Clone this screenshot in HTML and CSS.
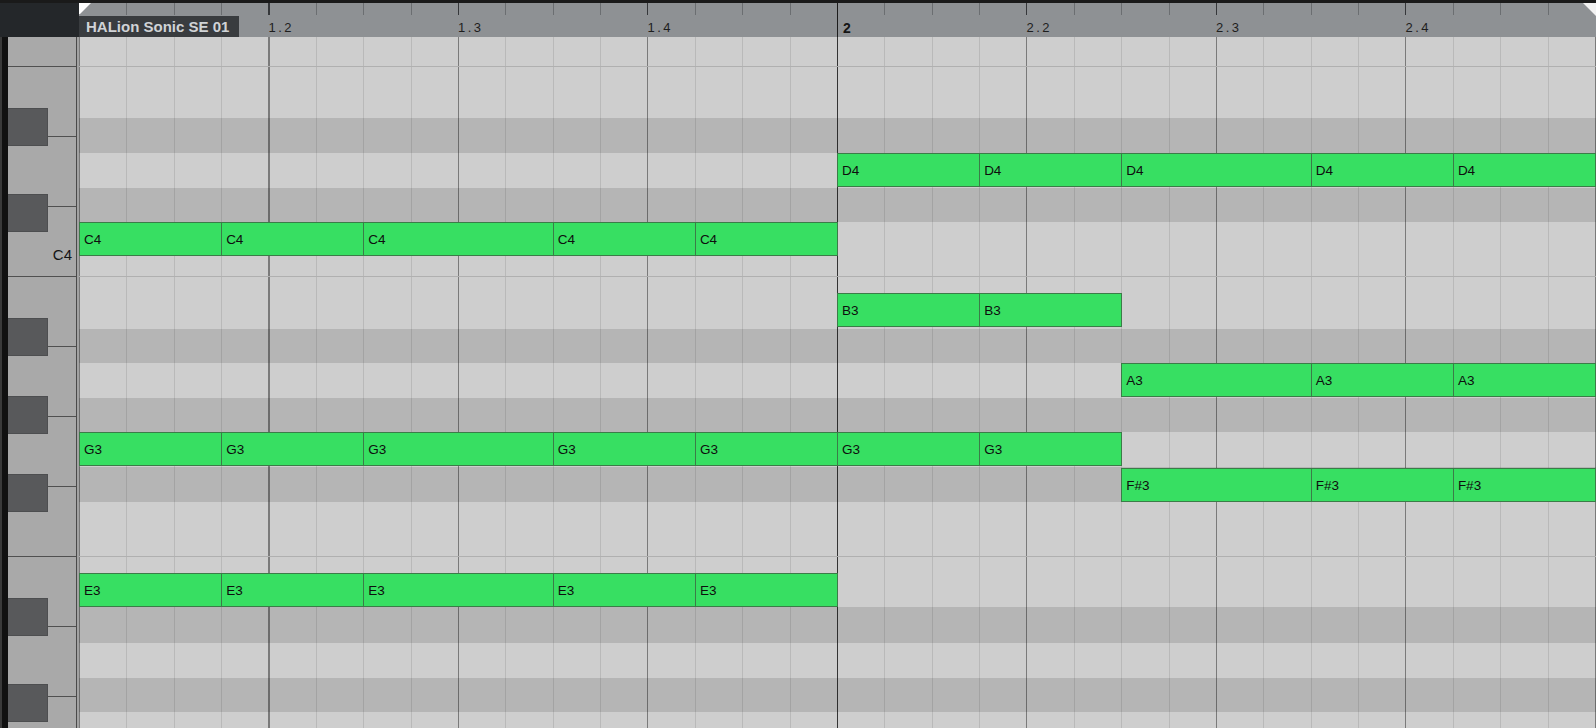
FILE: index.html
```html
<!DOCTYPE html>
<html lang="en">
<head>
  <meta charset="UTF-8">
  <meta name="viewport" content="width=device-width, initial-scale=1.0">
  <title>Key Editor</title>
  <link rel="stylesheet" href="styles.css">
</head>
<body>
  <div class="editor">
    <div class="topbar"></div>
    <header class="header">
      <div class="corner"></div>
      <div class="ruler">
        <div class="beat first"><span class="part-name">HALion Sonic SE 01</span></div>
        <div class="beat"><span>1.2</span></div>
        <div class="beat"><span>1.3</span></div>
        <div class="beat"><span>1.4</span></div>
        <div class="beat bar"><span class="bar-num">2</span></div>
        <div class="beat"><span>2.2</span></div>
        <div class="beat"><span>2.3</span></div>
        <div class="beat"><span>2.4</span></div>
      </div>
    </header>
    <main class="main">
      <div class="gutter"></div>
      <div class="piano">
        <div class="keys">
          <div class="wkey partial"></div>
          <div class="wkey"></div>
          <div class="wkey"></div>
          <div class="wkey"><span class="key-name">C4</span></div>
          <div class="wkey"></div>
          <div class="wkey"></div>
          <div class="wkey"></div>
          <div class="wkey"></div>
          <div class="wkey"></div>
          <div class="wkey"></div>
          <div class="wkey"></div>
        </div>
        <div class="bkey k1"></div>
        <div class="bkey k2"></div>
        <div class="bkey k3"></div>
        <div class="bkey k4"></div>
        <div class="bkey k5"></div>
        <div class="bkey k6"></div>
        <div class="bkey k7"></div>
      </div>
      <div class="roll">
        <!-- F4 -->
        <div class="row h29"></div>
        <!-- E4 -->
        <div class="row oct h52"></div>
        <!-- D#4 -->
        <div class="row dark"></div>
        <!-- D4 -->
        <div class="row">
          <div class="note at-17 n3">D4</div>
          <div class="note n3">D4</div>
          <div class="note n4">D4</div>
          <div class="note n3">D4</div>
          <div class="note n3">D4</div>
        </div>
        <!-- C#4 -->
        <div class="row dark h34"></div>
        <!-- C4 -->
        <div class="row h54">
          <div class="note n3">C4</div>
          <div class="note n3">C4</div>
          <div class="note n4">C4</div>
          <div class="note n3">C4</div>
          <div class="note n3">C4</div>
        </div>
        <!-- B3 -->
        <div class="row oct low h53">
          <div class="note at-17 n3">B3</div>
          <div class="note n3">B3</div>
        </div>
        <!-- A#3 -->
        <div class="row dark h34"></div>
        <!-- A3 -->
        <div class="row">
          <div class="note at-23 n4">A3</div>
          <div class="note n3">A3</div>
          <div class="note n3">A3</div>
        </div>
        <!-- G#3 -->
        <div class="row dark h34"></div>
        <!-- G3 -->
        <div class="row">
          <div class="note n3">G3</div>
          <div class="note n3">G3</div>
          <div class="note n4">G3</div>
          <div class="note n3">G3</div>
          <div class="note n3">G3</div>
          <div class="note n3">G3</div>
          <div class="note n3">G3</div>
        </div>
        <!-- F#3 -->
        <div class="row dark nudge">
          <div class="note at-23 n4">F#3</div>
          <div class="note n3">F#3</div>
          <div class="note n3">F#3</div>
        </div>
        <!-- F3 -->
        <div class="row h54"></div>
        <!-- E3 -->
        <div class="row oct low h51">
          <div class="note n3">E3</div>
          <div class="note n3">E3</div>
          <div class="note n4">E3</div>
          <div class="note n3">E3</div>
          <div class="note n3">E3</div>
        </div>
        <!-- D#3 -->
        <div class="row dark h36"></div>
        <!-- D3 -->
        <div class="row"></div>
        <!-- C#3 -->
        <div class="row dark h34"></div>
        <!-- C3 -->
        <div class="row h54"></div>
      </div>
    </main>
  </div>
</body>
</html>
```

FILE: styles.css
```css
* {
  box-sizing: border-box;
}
body {
  margin: 0;
  background: #121212;
  font-family: "Liberation Sans", Arial, sans-serif;
  overflow: hidden;
}
.editor {
  width: 1596px;
  height: 728px;
  overflow: hidden;
  display: flex;
  flex-direction: column;
}
.topbar {
  flex: none;
  height: 3px;
  background: #1a1a1a;
}

/* ruler */
.header {
  flex: none;
  display: flex;
  height: 34px;
}
.corner {
  width: 79px;
  background: #24272a;
}
.ruler {
  flex: 1;
  position: relative;
  display: grid;
  grid-template-columns: repeat(8, 189.5px);
  background:
    repeating-linear-gradient(to right, #35373a 0 1px, transparent 1px 189.5px) 0 0 / 100% 12px no-repeat,
    repeating-linear-gradient(to right, #6b6e71 0 1px, transparent 1px 47.375px) 0 0 / 100% 12px no-repeat,
    #8e9194;
}
.ruler::before {
  content: "";
  position: absolute;
  left: 0;
  top: 0;
  border-top: 12px solid #fff;
  border-right: 12px solid transparent;
}
.ruler::after {
  content: "";
  position: absolute;
  right: 0;
  top: 0;
  border-top: 13px solid #f2f2f2;
  border-left: 13px solid transparent;
}
.beat {
  display: flex;
  align-items: flex-end;
  padding-bottom: 2px;
}
.beat span {
  font-size: 13px;
  line-height: 14px;
  letter-spacing: 2.5px;
  color: #1e1e1e;
}
.beat.first {
  padding-bottom: 0;
}
.beat .part-name {
  width: 160px;
  height: 21px;
  line-height: 21px;
  padding-left: 7px;
  font-size: 15px;
  font-weight: bold;
  letter-spacing: 0;
  color: #d0d3d6;
  background: #393c3f;
  white-space: nowrap;
}
.beat.bar {
  border-left: 1px solid #1c1c1c;
  padding-left: 5px;
}
.beat .bar-num {
  font-size: 14px;
  font-weight: bold;
  letter-spacing: 0;
  color: #151515;
}

/* keyboard */
.main {
  flex: 1;
  display: flex;
  min-height: 0;
}
.gutter {
  flex: none;
  width: 8px;
  background: #111;
  border-left: 2px solid #3a3a3a;
}
.piano {
  flex: none;
  position: relative;
  width: 71px;
  background: #a2a2a2;
  overflow: hidden;
}
.keys {
  width: 69px;
  height: 100%;
  border-right: 1px solid #4a4a4a;
  background: #a9a9a9;
}
.wkey {
  height: 70px;
  display: flex;
  justify-content: flex-end;
  align-items: flex-end;
  padding: 0 4px 14px 0;
}
.wkey + .wkey {
  border-top: 1px solid #505050;
}
.wkey.partial {
  height: 29px;
}
.key-name {
  font-size: 15px;
  line-height: 15px;
  color: #151515;
}
.bkey {
  position: absolute;
  left: 0;
  width: 40px;
  height: 38px;
  background: #58595b;
  border: 1px solid #4d4e50;
  border-left: none;
}
.k1 { top: 71px; }
.k2 { top: 157px; }
.k3 { top: 281px; }
.k4 { top: 359px; }
.k5 { top: 437px; }
.k6 { top: 561px; }
.k7 { top: 647px; }

/* note grid */
.roll {
  flex: 1;
  display: flex;
  flex-direction: column;
  overflow: hidden;
}
.row {
  flex: none;
  height: 35px;
  display: grid;
  grid-template-columns: repeat(32, 47.375px);
  grid-template-rows: 34px;
  align-content: start;
  background-color: #cecece;
  background-image:
    linear-gradient(to right, transparent 758px, rgba(0, 0, 0, 0.58) 758px 759px, transparent 759px),
    repeating-linear-gradient(to right, rgba(0, 0, 0, 0.34) 0 1px, transparent 1px 189.5px),
    repeating-linear-gradient(to right, rgba(0, 0, 0, 0.1) 0 1px, transparent 1px 47.375px);
}
.row.dark {
  background-color: #b5b5b5;
}
.row.oct {
  border-top: 1px solid #b0b0b0;
}
.row.low {
  padding-top: 16px;
}
.row.nudge {
  padding-top: 1px;
}
.h29 { height: 29px; }
.h34 { height: 34px; }
.h36 { height: 36px; }
.h51 { height: 51px; }
.h52 { height: 52px; }
.h53 { height: 53px; }
.h54 { height: 54px; }

.note {
  margin-right: -1px;
  display: flex;
  align-items: center;
  padding-left: 4px;
  background: #37df62;
  border: 1px solid #3b7c48;
  font-size: 13.5px;
  color: #0e0e0e;
  white-space: nowrap;
  overflow: hidden;
}
.n3 { grid-column-end: span 3; }
.n4 { grid-column-end: span 4; }
.at-17 { grid-column-start: 17; }
.at-23 { grid-column-start: 23; }
```
